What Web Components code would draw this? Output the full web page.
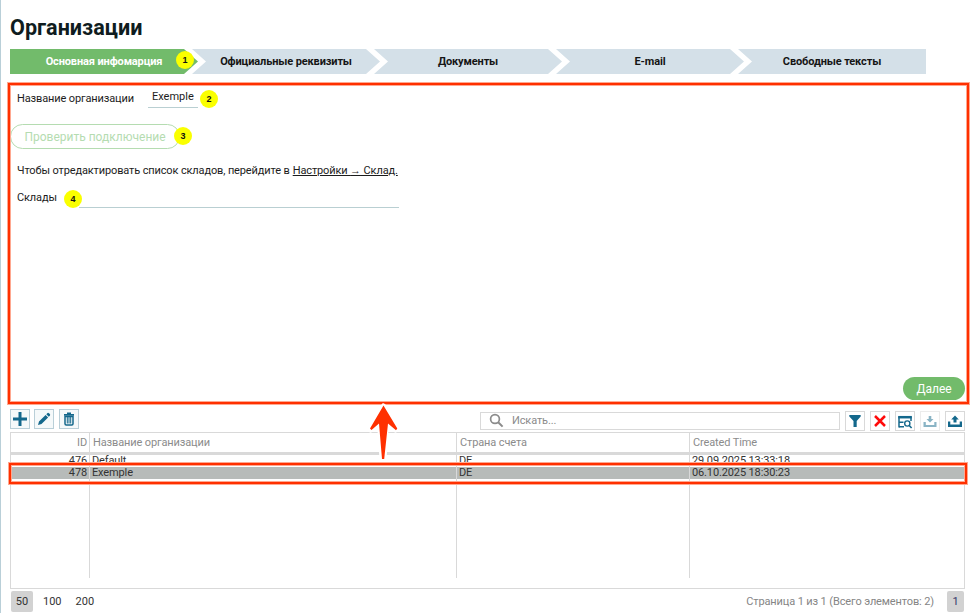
<!DOCTYPE html>
<html lang="ru">
<head>
<meta charset="utf-8">
<title>Организации</title>
<style>
    body { margin: 0; font-family: Roboto, "Liberation Sans", sans-serif; font-size: 11px; letter-spacing: -0.13px; color: #1c1c1c; background: #fff; }
</style>
</head>
<body>
<org-page></org-page>

<template id="org-page">
    <style>
        :host { display: flex; flex-direction: column; position: relative; box-sizing: border-box; height: 613px; padding-left: 9px; border-left: 1px solid #b9cfd8; overflow: hidden; }
        h1 { margin: 14px 0 0; height: 35px; font-size: 21.6px; line-height: 27px; font-weight: 700; letter-spacing: 0; color: #0f1c20; }
        .steps { display: flex; height: 25px; }
        .tools { display: flex; height: 24px; width: 955px; gap: 4px; }
        .search { display: flex; align-items: center; box-sizing: border-box; width: 360px; height: 18px; margin: 3px 0 0 auto; border: 1px solid #d9d9d9; padding: 0 0 2px 8px; color: #8b8b8b; }
        .search svg { width: 15px; height: 15px; margin: 1px 8px 0 0; }
        .pager { display: flex; align-items: center; height: 21px; margin-top: 2px; width: 954px; color: #333; letter-spacing: 0; }
        .pager b { font-weight: 400; line-height: 21px; background: #d2d2d2; border-radius: 2px; text-align: center; }
        .size { width: 22px; margin-left: 1px; }
        .pager span { margin-left: 10px; }
        .pager .last { margin-left: 14px; }
        .pager .total { margin: 0 13px 0 auto; color: #858585; letter-spacing: -0.12px; }
        .page { width: 17px; color: #35356b; }
        red-frame, note-badge, svg.arrow { position: absolute; }
        svg.arrow { left: 366px; top: 402px; width: 33px; height: 60px; }
    </style>
    <h1>Организации</h1>
    <div class="steps">
        <org-step active>Основная инфомарция</org-step>
        <org-step>Официальные реквизиты</org-step>
        <org-step>Документы</org-step>
        <org-step>E-mail</org-step>
        <org-step>Свободные тексты</org-step>
    </div>
    <org-form></org-form>
    <div class="tools">
        <icon-button name="add"></icon-button>
        <icon-button name="edit"></icon-button>
        <icon-button name="remove"></icon-button>
        <div class="search">
            <svg viewBox="0 0 15 15" fill="none" stroke="#8b8b8b"><circle cx="6" cy="6" r="4.4" stroke-width="1.7"/><path d="M9.2 9.2L13.6 13.6" stroke-width="2"/></svg>
            <span>Искать...</span>
        </div>
        <icon-button name="filter" plain></icon-button>
        <icon-button name="clear" plain></icon-button>
        <icon-button name="lookup" plain></icon-button>
        <icon-button name="import" plain disabled></icon-button>
        <icon-button name="export" plain></icon-button>
    </div>
    <org-table></org-table>
    <div class="pager">
        <b class="size">50</b><span>100</span><span class="last">200</span>
        <span class="total">Страница 1 из 1 (Всего элементов: 2)</span>
        <b class="page">1</b>
    </div>
    <red-frame style="left:6px;top:82px;width:963px;height:323px"></red-frame>
    <red-frame style="left:7px;top:462px;width:960px;height:23px"></red-frame>
    <svg class="arrow" viewBox="0 0 33 60"><path d="M16.5 4L30 26L28.5 28L19.5 21L17 57H15L12.5 21L3.500 28L2.500 26Z" fill="#fff" stroke="#fff" stroke-width="5" stroke-linejoin="round"/><path d="M16.500 3.500L30.300 26.500L29 28.200L21 21.500L17.200 57H15L12 21.500L4.500 28L3 26.500Z" fill="#ff3000"/></svg>
    <note-badge style="left:175px;top:51px">1</note-badge>
    <note-badge style="left:199px;top:90px">2</note-badge>
    <note-badge style="left:173px;top:127px">3</note-badge>
    <note-badge style="left:63px;top:190px">4</note-badge>
</template>

<template id="org-step">
    <style>
        :host { display: block; flex: none; width: 188px; margin-right: -6px; background: #d4e0e8; color: #151515; font-weight: 700; line-height: 25px; text-align: center; clip-path: polygon(0 0, 174px 0, 188px 50%, 174px 100%, 0 100%, 14px 50%); }
        :host([active]) { background: #72bb6b; color: #fff; clip-path: polygon(0 0, 174px 0, 188px 50%, 174px 100%, 0 100%); }
        :host(:last-child) { clip-path: polygon(0 0, 100% 0, 100% 100%, 0 100%, 14px 50%); }
    </style>
    <slot></slot>
</template>

<template id="org-form">
    <style>
        :host { display: flex; flex-direction: column; box-sizing: border-box; height: 335px; width: 955px; padding-top: 13px; }
        .row { display: flex; padding-left: 7px; line-height: 14px; }
        .name { height: 37px; }
        .name label { width: 131px; padding-top: 5px; }
        .value { box-sizing: border-box; width: 50px; height: 21px; padding: 3px 0 0 4px; border-bottom: 1px solid #b9cfd2; letter-spacing: 0; }
        button { font-family: inherit; margin: 0; padding: 0; }
        .check { width: 170px; height: 25px; border: 1px solid #b5dcb1; border-radius: 13px; background: #fff; color: #b5dcb1; font-size: 12px; }
        .hint { margin-top: 15px; }
        .hint a { color: inherit; text-decoration: underline; margin-left: 3px; white-space: nowrap; }
        .hint i { font: 11px/1 "Liberation Sans", sans-serif; }
        .stock { margin-top: 13px; }
        .stock label { width: 62px; }
        .stock div { width: 320px; height: 16px; border-bottom: 1px solid #b9cfd2; }
        .next { align-self: flex-end; width: 62px; height: 23px; margin: auto 0 9px; border: 0; border-radius: 12px; background: #72bb6b; color: #fff; font-size: 12px; }
    </style>
    <div class="row name"><label>Название организации</label><div class="value">Exemple</div></div>
    <button class="check" disabled>Проверить подключение</button>
    <div class="row hint"><span>Чтобы отредактировать список складов, перейдите в</span><a>Настройки <i>→</i> Склад.</a></div>
    <div class="row stock"><label>Склады</label><div></div></div>
    <button class="next">Далее</button>
</template>

<template id="org-table">
    <style>
        :host { display: block; box-sizing: border-box; width: 955px; height: 157px; border: 1px solid #d9d9d9; margin-top: -1px; }
        .tr { display: grid; grid-template-columns: 78px 367px 233px 1fr; }
        .tr > * { box-sizing: border-box; border-left: 1px solid #d9d9d9; padding-left: 2px; }
        .tr > :first-child { border-left: 0; padding: 0 2px 0 0; text-align: right; }
        .head { height: 22px; line-height: 19px; border-bottom: 3px solid #d9d9d9; box-sizing: border-box; color: #8b8b8b; }
        .head > * { padding-left: 3px; }
        .row { height: 12px; line-height: 12px; color: #333; }
        .row.selected { background: #b7bbb9; }
        .rest { height: 99px; }
    </style>
    <div class="tr head"><div>ID</div><div>Название организации</div><div>Страна счета</div><div>Created Time</div></div>
    <div class="tr row"><div>476</div><div>Default</div><div>DE</div><div>29.09.2025 13:33:18</div></div>
    <div class="tr row selected"><div>478</div><div>Exemple</div><div>DE</div><div>06.10.2025 18:30:23</div></div>
    <div class="tr rest"><div></div><div></div><div></div><div></div></div>
</template>

<template id="red-frame">
    <style>
        :host { display: block; box-sizing: border-box; border: 1px solid #ffa890; }
        div { box-sizing: border-box; height: 100%; border: 2px solid #ff3000; outline: 1px solid #ffa890; outline-offset: -3px; }
    </style>
    <div></div>
</template>

<template id="note-badge">
    <style>
        :host { display: block; width: 18px; height: 18px; border-radius: 50%; background: #faff00; color: #111; font: 700 9px/19px "Liberation Sans", sans-serif; text-align: center; }
    </style>
    <slot></slot>
</template>

<template id="icon-button">
    <style>
        :host { display: flex; align-items: center; justify-content: center; flex: none; box-sizing: border-box; width: 20px; height: 20px; border: 1px solid #b9cfd8; background: #f5f9fa; color: #14688c; }
        :host([name="remove"]) { margin-left: 1px; }
        :host([plain]) { border-color: #d9d9d9; background: #fff; margin: 2px 0 0 1px; }
        :host([disabled]) { color: #8ab4c5; border-color: #ececec; }
        svg { width: 16px; height: 16px; }
    </style>
    <svg viewBox="0 0 16 16"></svg>
</template>

<script>
    const icons = {
        add: '<path d="M6.500 1H9.500V6.500H15V9.500H9.500V15H6.500V9.500H1V6.500H6.500Z" fill="currentColor"/>',
        edit: '<path d="M2 14L3 10.500L9.600 3.900L12.100 6.400L5.500 13ZM10.300 3.200L11.600 1.900Q12.300 1.500 13 2.200L13.800 3Q14.500 3.700 14 4.400L12.800 5.700Z" fill="currentColor"/>',
        remove: '<path d="M3 3H6V1.500H10V3H13V4.700H3Z" fill="currentColor"/><path d="M4 5.500H12V12.800Q12 14 10.800 14H5.200Q4 14 4 12.800Z" fill="none" stroke="currentColor" stroke-width="1.500"/><path d="M6.300 6V12.500M8 6V12.500M9.700 6V12.500" stroke="currentColor" stroke-width="1"/>',
        filter: '<path d="M2.300 2H13.700V3.500L9.700 8V14H6.500V8L2.300 3.500Z" fill="currentColor"/>',
        clear: '<path d="M3 3L13 13M13 3L3 13" stroke="#ff0a0a" stroke-width="2.500"/>',
        lookup: '<path d="M2 14.500V4H14V8" fill="none" stroke="currentColor" stroke-width="1.500"/><path d="M1.300 4.200H14.700" stroke="currentColor" stroke-width="2.500"/><path d="M2 9.200H6.500M2 13.800H7" stroke="currentColor" stroke-width="1.500"/><circle cx="10.300" cy="10.500" r="2.600" fill="none" stroke="currentColor" stroke-width="1.400"/><path d="M12.200 12.500L14.600 15" stroke="currentColor" stroke-width="1.600"/>',
        import: '<path d="M1.500 9H3.800V12H12.300V9H14.500V14H1.500Z" fill="currentColor"/><path d="M6.700 3H9.300V6H11.500L8 9.500L4.500 6H6.700Z" fill="currentColor"/>',
        export: '<path d="M1 8.500H3.300V11.500H12.700V8.500H15V14H1Z" fill="currentColor"/><path d="M6.500 9.500H9.500V6.500H11.800L8 2.500L4.200 6.500H6.500Z" fill="currentColor"/>'
    };

    // Every element clones the template that has its own name.
    class BaseElement extends HTMLElement {
        constructor() {
            super();
            const tmpl = document.getElementById(this.localName);
            this.attachShadow({mode: 'open'}).appendChild(document.importNode(tmpl.content, true));
        }
    }

    class IconButton extends BaseElement {
        connectedCallback() {
            this.shadowRoot.querySelector('svg').innerHTML = icons[this.getAttribute('name')];
        }
    }

    customElements.define('icon-button', IconButton);
    ['note-badge', 'red-frame', 'org-step', 'org-form', 'org-table', 'org-page'].forEach(name => {
        customElements.define(name, class extends BaseElement {});
    });
</script>
</body>
</html>
